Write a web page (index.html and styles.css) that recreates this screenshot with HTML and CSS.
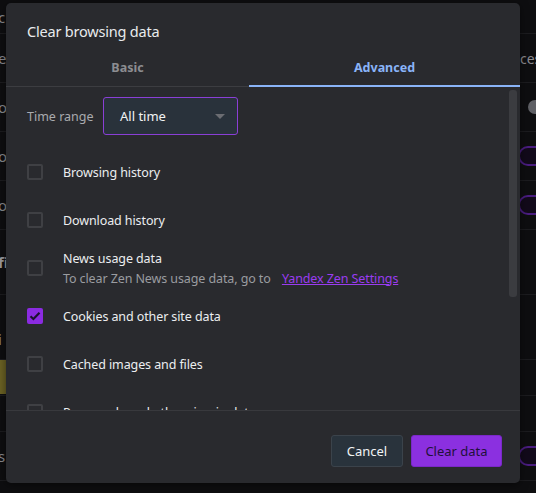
FILE: index.html
```html
<!DOCTYPE html>
<html lang="en">
<head>
    <meta charset="UTF-8">
    <meta name="viewport" content="width=device-width, initial-scale=1.0">
    <title>Clear browsing data</title>
    <link rel="stylesheet" href="styles.css">
</head>
<body>
    <!-- settings page behind the dialog -->
    <div class="page">
        <div class="row r-top"><span class="frag">c</span></div>
        <div class="row"><span class="frag">e</span><span class="rtext">ces</span></div>
        <div class="row"><span class="frag">o</span><span class="knob"></span></div>
        <div class="row"><span class="frag">o</span><span class="toggle"></span></div>
        <div class="row"><span class="frag">o</span><span class="toggle"></span></div>
        <div class="row r-tall"><span class="frag bold">fi</span></div>
        <div class="row r-tall r-low"><span class="frag">i</span></div>
        <div class="row r-yellow"><span class="mark"></span></div>
        <div class="row r-short"></div>
        <div class="row"><span class="frag">s</span><span class="toggle"></span></div>
    </div>

    <div class="dialog">
        <h2 class="title">Clear browsing data</h2>
        <div class="tabs">
            <div class="tab">Basic</div>
            <div class="tab active">Advanced</div>
        </div>

        <div class="body">
            <div class="list">
                <div class="range">
                    <span class="label">Time range</span>
                    <div class="select">
                        <span>All time</span>
                        <span class="arrow"></span>
                    </div>
                </div>

                <div class="item">
                    <span class="box"></span>
                    <span class="name">Browsing history</span>
                </div>
                <div class="item">
                    <span class="box"></span>
                    <span class="name">Download history</span>
                </div>
                <div class="item">
                    <span class="box"></span>
                    <div>
                        <div class="name">News usage data</div>
                        <div class="sub">To clear Zen News usage data, go to <a href="#">Yandex Zen Settings</a></div>
                    </div>
                </div>
                <div class="item">
                    <span class="box checked">
                        <svg width="12" height="10" viewBox="0 0 12 10"><path d="M1.5 5.2 L4.4 8 L10.5 1.8" fill="none" stroke="#1c1130" stroke-width="2.2"/></svg>
                    </span>
                    <span class="name">Cookies and other site data</span>
                </div>
                <div class="item">
                    <span class="box"></span>
                    <span class="name">Cached images and files</span>
                </div>
                <div class="item">
                    <span class="box"></span>
                    <span class="name">Passwords and other sign-in data</span>
                </div>
            </div>
            <div class="scroll"><div class="thumb"></div></div>
        </div>

        <div class="footer">
            <button class="btn cancel">Cancel</button>
            <button class="btn primary">Clear data</button>
        </div>
    </div>
</body>
</html>
```

FILE: styles.css
```css
*{
    padding: 0px;
    margin: 0px;
    box-sizing: border-box;
}
body{
    background: #0e0e10;
    font-family: "Noto Sans", "Open Sans", sans-serif;
    color: #e8eaed;
    width: 536px;
    height: 493px;
    overflow: hidden;
}

/* background page */
.row{
    height: 49px;
    border-bottom: 1px solid #1c1c1f;
    display: flex;
    align-items: center;
    justify-content: space-between;
}
.r-top{
    height: 34px;
}
.r-tall{
    height: 65px;
}
.r-low{
    align-items: flex-end;
    padding-bottom: 10px;
}
.r-short{
    height: 36px;
}
.r-yellow{
    height: 36px;
    align-items: flex-start;
}
.frag{
    font-size: 15px;
    color: #8a8a8e;
    margin-left: -2px;
}
.frag.bold{
    font-weight: bold;
    color: #9a9a9e;
}
.mark{
    width: 6px;
    height: 34px;
    background: #6b6224;
}
.rtext{
    font-size: 14px;
    color: #8a8a8e;
    margin-left: auto;
    width: 16px;
    overflow: hidden;
    white-space: nowrap;
}
.knob{
    margin-left: auto;
    width: 14px;
    height: 14px;
    border-radius: 50%;
    background: #5f6065;
    margin-right: -6px;
}
.toggle{
    margin-left: auto;
    width: 18px;
    height: 20px;
    border-radius: 10px 0 0 10px;
    border: 2px solid #4a1d80;
    border-right: none;
    background: #120a1a;
}

/* dialog */
.dialog{
    position: absolute;
    left: 6px;
    top: 3px;
    width: 514px;
    height: 480px;
    background: #292a2e;
    border-radius: 5px;
    display: flex;
    flex-direction: column;
    box-shadow: 0 2px 8px rgba(0,0,0,0.5);
}
.title{
    font-size: 14.5px;
    font-weight: normal;
    padding: 18px 21px 0;
    height: 48px;
    letter-spacing: -0.2px;
}
.tabs{
    display: flex;
    height: 36px;
    border-bottom: 1px solid #3c3d41;
}
.tab{
    flex: 0 0 243px;
    text-align: center;
    font-size: 12.5px;
    font-weight: bold;
    color: #8c8d91;
    padding-top: 8px;
}
.tab.active{
    flex: 1;
    color: #8ab4f8;
    border-bottom: 2px solid #8ab4f8;
    margin-bottom: -1px;
}
.body{
    flex: 1;
    display: flex;
    overflow: hidden;
}
.list{
    flex: 1;
    padding: 10px 0 0 21px;
}
.range{
    display: flex;
    align-items: center;
    height: 38px;
    margin-bottom: 13px;
}
.label{
    font-size: 12.5px;
    color: #a9abaf;
    width: 76px;
}
.select{
    width: 135px;
    height: 38px;
    border: 1px solid #8a3fd6;
    border-radius: 3px;
    background: #29323b;
    display: flex;
    align-items: center;
    justify-content: space-between;
    padding: 0 12px 0 16px;
    font-size: 13px;
    color: #f1f3f4;
}
.arrow{
    width: 0;
    height: 0;
    border-left: 5px solid transparent;
    border-right: 5px solid transparent;
    border-top: 5px solid #6b6d72;
}
.item{
    display: flex;
    align-items: center;
    height: 48px;
}
.box{
    width: 16px;
    height: 16px;
    border: 2px solid #3f4044;
    border-radius: 2px;
    margin-right: 20px;
    flex: none;
    display: flex;
    align-items: center;
    justify-content: center;
}
.box.checked{
    background: #8b2be2;
    border-color: #8b2be2;
}
.name{
    font-size: 12.5px;
    letter-spacing: -0.1px;
    color: #eceef0;
}
.sub{
    font-size: 12.5px;
    letter-spacing: -0.1px;
    color: #9a9ca0;
    margin-top: 3px;
}
.sub a{
    color: #9a3cf0;
    margin-left: 8px;
}
.scroll{
    width: 11px;
    padding: 3px 3px 0 0;
}
.thumb{
    height: 207px;
    background: #3b3c40;
    border-radius: 3px;
}
.footer{
    height: 73px;
    border-top: 1px solid #38393d;
    display: flex;
    justify-content: flex-end;
    align-items: flex-start;
    gap: 8px;
    padding: 24px 18px 0 0;
}
.btn{
    height: 32px;
    font-family: inherit;
    font-size: 13px;
    border-radius: 3px;
    padding: 0;
    white-space: nowrap;
}
.cancel{
    background: #29333c;
    border: 1px solid #3b434b;
    color: #f1f3f4;
    width: 72px;
}
.primary{
    background: #8b30e0;
    border: 1px solid #7a28c8;
    color: #22103a;
    width: 91px;
}
```
